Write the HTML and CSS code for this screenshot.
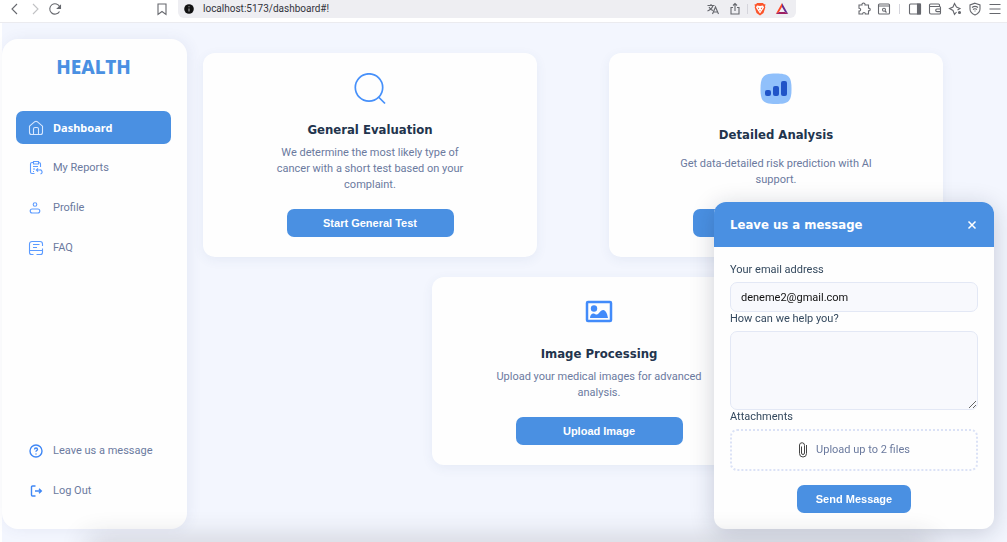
FILE: index.html
```html
<!DOCTYPE html>
<html lang="en">
<head>
<meta charset="utf-8">
<meta name="viewport" content="width=device-width, initial-scale=1">
<title>Health Dashboard</title>
<link rel="stylesheet" href="styles.css">
</head>
<body>
<header class="browser">
  <div class="browser-left">
    <button class="tool" aria-label="Back"><svg viewBox="0 0 16 16"><path d="M10 3 5 8l5 5"/></svg></button>
    <button class="tool faded" aria-label="Forward"><svg viewBox="0 0 16 16"><path d="M6 3l5 5-5 5"/></svg></button>
    <button class="tool" aria-label="Reload"><svg viewBox="0 0 16 16"><path d="M12.500 10.500A5.200 5.200 0 1 1 12.800 6"/><path class="solid" d="M13.500 4.500v3h-3z"/></svg></button>
    <button class="tool bookmark" aria-label="Bookmark"><svg viewBox="0 0 16 16"><path d="M4 3h8v10.500L8 10.500l-4 3z"/></svg></button>
  </div>
  <div class="address">
    <svg class="info" viewBox="0 0 10 10"><circle cx="5" cy="5" r="4.800" fill="#111"/><path d="M5 4.500v3M5 2.300v1" stroke="#999" stroke-width="1.200"/></svg>
    <input class="url" type="text" aria-label="Address" value="localhost:5173/dashboard#!">
    <button class="tool" aria-label="Translate"><svg viewBox="0 0 16 16"><path d="M2.500 4.500h7M6 3v1.500M8 4.500C7 7.500 5 9 2.500 10M4 6c1 2 2 3 4 3.500M7.500 13l3-7 3 7M8.500 11h4"/></svg></button>
    <button class="tool" aria-label="Share"><svg viewBox="0 0 16 16"><path d="M6 6.500H4v6.500h8V6.500h-2M8 10V2.500M6 4.500l2-2 2 2"/></svg></button>
    <span class="divider"></span>
    <button class="tool brave" aria-label="Brave Shields"><svg viewBox="0 0 16 16"><path fill="#fb542b" d="M5 2h6l1 1.200h1.500L13 5.500l.3 1L11.500 12 8 14.500 4.500 12 2.700 6.500l.3-1L2.500 3.200H4z"/><path fill="#fff" d="M5 4.500l3 .5 3-.5 1 2-1.800 2.700L8 12.500 5.800 9.200 4 6.500z"/><path fill="#fb542b" d="M5.500 6.500l1.700.5-.4 1.500zM10.500 6.500l-1.700.5.4 1.500zM7 9.500h2l-1 1z"/></svg></button>
    <button class="tool rewards" aria-label="Rewards"><svg viewBox="0 0 16 16"><path fill="#ff4724" d="M8 2 1.800 13l3.200-2L8 6z"/><path fill="#662d91" d="M8 2l6.200 11L11 11 8 6z"/><path fill="#9e1f63" d="M1.800 13h12.400L11 11H5z"/></svg></button>
  </div>
  <div class="browser-right">
    <button class="tool" aria-label="Extensions"><svg viewBox="0 0 16 16"><path d="M3 4h3c-.6-2.600 3.600-2.600 3 0h3.500v3.200c2.300-.4 2.300 3 0 2.600V13H9.300c.2-2-2.800-2-2.600 0H3v-3c2.200.2 2.200-3 0-2.800z"/></svg></button>
    <button class="tool" aria-label="Search tabs"><svg viewBox="0 0 16 16"><rect x="2.500" y="3" width="11" height="10" rx="1"/><path d="M2.500 5h11M9 10l1.500 1.500"/><circle cx="8" cy="8.800" r="1.500"/></svg></button>
    <span class="divider"></span>
    <button class="tool" aria-label="Side panel"><svg viewBox="0 0 16 16"><rect x="2.500" y="3" width="11" height="10" rx="1"/><path class="solid" d="M10.500 3h3v10h-3z"/></svg></button>
    <button class="tool" aria-label="Wallet"><svg viewBox="0 0 16 16"><path d="M12.500 5.500V4c0-.6-.4-1-1-1h-8a1 1 0 0 0-1 1v7.500c0 1 .7 1.500 1.500 1.500h8.500c.6 0 1-.4 1-1V6.500c0-.6-.4-1-1-1h-10M13.500 8H10a1.300 1.300 0 0 0 0 2.600h3.500"/></svg></button>
    <button class="tool" aria-label="Assistant"><svg viewBox="0 0 16 16"><path d="M9.500 11 7.500 13.500 6 9.500 2.500 7.500 6 6l1.500-3.500L9.500 6l3.500 1.500L10.500 9"/><circle class="solid" cx="12.500" cy="11.500" r="1"/></svg></button>
    <button class="tool" aria-label="VPN"><svg viewBox="0 0 16 16"><path d="M8 2.200 13 4v4c0 3-2 4.700-5 6-3-1.300-5-3-5-6V4zM5 6.500c2-1.500 4-1.500 6 0M6 8.500c1.300-1 2.700-1 4 0M7.500 10h1"/></svg></button>
    <button class="tool" aria-label="Menu"><svg viewBox="0 0 16 16"><path d="M2.500 3.500h11M2.500 8h11M2.500 12.500h11"/></svg></button>
  </div>
</header>

<div class="page">
  <aside class="sidebar">
    <h1 class="brand">HEALTH</h1>
    <nav class="nav">
      <a class="nav-link active" href="#"><svg viewBox="0 0 16 16"><path d="M1.500 6.200 6.800 1.700a2 2 0 0 1 2.400 0l5.300 4.500v6.300a2 2 0 0 1-2 2h-9a2 2 0 0 1-2-2zM5.500 14.500V9a1.500 1.500 0 0 1 1.500-1.500h2A1.500 1.500 0 0 1 10.500 9v5.500"/></svg>Dashboard</a>
      <a class="nav-link" href="#"><svg viewBox="0 0 16 16"><path d="M6.500 13.500H4A1.500 1.500 0 0 1 2.500 12V4A1.500 1.500 0 0 1 4 2.500h1M11 2.500a1.500 1.500 0 0 1 1.500 1.500v3M5.500 1.500h5V4h-5zM5 6.500h5M5 9h2M5 11.500h1M8.500 10h3a2 2 0 0 1 1 4M10 8.300 8.300 10 10 11.700"/></svg>My Reports</a>
      <a class="nav-link" href="#"><svg viewBox="0 0 16 16"><circle cx="7" cy="4.500" r="1.800"/><rect x="2.200" y="9" width="9.600" height="4" rx="2"/></svg>Profile</a>
      <a class="nav-link" href="#"><svg viewBox="0 0 16 16"><path d="M14.500 6V4a2.500 2.500 0 0 0-2.500-2.500H4A2.500 2.500 0 0 0 1.500 4v8.500a2 2 0 0 0 2 2h2M1.500 10.500h13V8.500M14.500 10.500v2a2 2 0 0 1-2 2H8.500M5 4.500h6.500M5 7.500h4"/></svg>FAQ</a>
    </nav>
    <nav class="nav nav-bottom">
      <a class="nav-link" href="#message"><svg viewBox="0 0 16 16"><circle class="bold" cx="8" cy="8" r="6"/><path class="bold" d="M6.500 6.500c0-2 3-2 3 0 0 1-1.500 1-1.500 2.200M8 10.500v1"/></svg>Leave us a message</a>
      <a class="nav-link" href="#"><svg viewBox="0 0 16 16"><path class="bold" d="M7.500 3H4.500a1 1 0 0 0-1 1v8a1 1 0 0 0 1 1h3M7 8h6M11 5.800 13.300 8 11 10.200"/></svg>Log Out</a>
    </nav>
  </aside>

  <main class="cards">
    <section class="card">
      <svg class="card-icon" viewBox="0 0 32 32"><circle cx="15" cy="14.500" r="13.700" fill="none" stroke="#4690fa" stroke-width="1.700"/><path d="M24.500 24l6.500 6.500" stroke="#4690fa" stroke-width="1.700"/></svg>
      <h2 class="card-title">General Evaluation</h2>
      <p class="card-text">We determine the most likely type of cancer with a short test based on your complaint.</p>
      <button class="button">Start General Test</button>
    </section>
    <section class="card">
      <svg class="card-icon" viewBox="0 0 32 32"><path fill="#90c0fb" d="M16 .5C28.500.5 31.500 3.500 31.500 16S28.500 31 16 31 .5 28.500.5 16 3.500.5 16 .5z"/><rect x="5" y="17" width="6" height="6" rx="2" fill="#2054c8"/><rect x="13" y="13" width="6" height="10" rx="2" fill="#2054c8"/><rect x="21" y="8" width="6" height="15" rx="2" fill="#2054c8"/></svg>
      <h2 class="card-title">Detailed Analysis</h2>
      <p class="card-text">Get data-detailed risk prediction with AI support.</p>
      <button class="button" aria-label="Start detailed analysis"></button>
    </section>
    <section class="card card-wide">
      <svg class="card-icon" viewBox="0 0 32 32"><rect x="4" y="5" width="24" height="19" rx="1" fill="none" stroke="#428bfa" stroke-width="2.500"/><circle cx="11" cy="11.500" r="3.200" fill="#428bfa"/><path fill="#428bfa" d="M7 21c0-3 2-5 4-4.500 2 1.500 3 1.500 5-.5 3-4 6-4 8 1l1 4z"/></svg>
      <h2 class="card-title">Image Processing</h2>
      <p class="card-text">Upload your medical images for advanced analysis.</p>
      <button class="button">Upload Image</button>
    </section>
  </main>
</div>

<form class="message" id="message">
  <div class="message-head">
    <h2 class="message-title">Leave us a message</h2>
    <button class="close" type="button" aria-label="Close"><svg viewBox="0 0 10 10"><path d="M1.500 1.500l7 7M8.500 1.500l-7 7"/></svg></button>
  </div>
  <div class="message-body">
    <label class="label" for="email">Your email address</label>
    <input class="field" id="email" type="email" value="deneme2@gmail.com">
    <label class="label" for="help">How can we help you?</label>
    <textarea class="field area" id="help"></textarea>
    <label class="label" for="files">Attachments</label>
    <button class="drop" id="files" type="button"><svg viewBox="0 0 10 16"><path d="M3.500 4.500V11a1.500 1.500 0 0 0 3 0V3.500a2.500 2.500 0 0 0-5-.5v8.500a3.500 3.500 0 0 0 7 0V3"/></svg>Upload up to 2 files</button>
    <button class="button send" type="submit">Send Message</button>
  </div>
</form>
</body>
</html>
```

FILE: styles.css
```css
* {
  box-sizing: border-box;
}

body {
  margin: 0;
  min-height: 100vh;
  display: flex;
  flex-direction: column;
  background: #f3f6fe;
  color: #6b7a9e;
  font: 11px/16px Tahoma, Roboto, sans-serif;
}

/* Soft shade along the bottom edge of the window */
body::after {
  content: "";
  position: fixed;
  right: 80px;
  bottom: -14px;
  left: 90px;
  height: 14px;
  box-shadow: 0 0 28px 2px rgba(40, 40, 50, 0.24);
  pointer-events: none;
}

button,
input,
textarea {
  font: inherit;
  margin: 0;
}

button {
  border: 0;
  cursor: pointer;
}

h1,
h2,
p {
  margin: 0;
}

/* Browser toolbar */
.browser {
  display: flex;
  height: 23px;
  padding: 0 2px 4px 5px;
  background: #fff;
  border-bottom: 1px solid #ebebef;
}

.browser-left,
.browser-right,
.address {
  display: flex;
  align-items: center;
}

.browser-left {
  width: 173px;
  padding-right: 6px;
}

.bookmark {
  margin-left: auto;
}

.browser-right {
  margin-left: auto;
}

.address {
  flex: 1;
  gap: 2px;
  margin-right: 58px;
  padding: 0 4px 0 6px;
  border-radius: 0 0 6px 6px;
  background: #eeeef2;
}

.info {
  width: 10px;
  height: 10px;
}

.url {
  flex: 1;
  min-width: 0;
  padding: 0 0 0 7px;
  border: 0;
  background: none;
  color: #33343c;
  font: 10px/16px Roboto, sans-serif;
}

.tool {
  display: flex;
  justify-content: center;
  width: 20px;
  padding: 0;
  background: none;
}

.tool svg {
  width: 16px;
  height: 16px;
  fill: none;
  stroke: #66686e;
  stroke-width: 1.1;
}

.tool .solid {
  fill: #66686e;
}

.faded {
  opacity: 0.4;
}

.tool.brave svg,
.tool.rewards svg {
  stroke: none;
}

.divider {
  width: 1px;
  height: 10px;
  margin: 0 5px;
  background: #d5d5dc;
}

.address .divider {
  margin: 0;
}

/* Page */
.page {
  flex: 1;
  display: flex;
  gap: 16px;
  padding: 16px 12px 13px 0;
  border-left: 2px solid #fff;
}

.sidebar {
  flex: none;
  display: flex;
  flex-direction: column;
  width: 185px;
  padding: 16px 16px 22px 14px;
  border-radius: 16px;
  background: #fefefe;
  box-shadow: 2px 0 14px rgba(60, 80, 140, 0.08);
}

.brand {
  margin-bottom: 32px;
  color: #4a90e2;
  font: 800 19px/24px "Noto Sans", sans-serif;
  text-align: center;
}

.nav {
  display: flex;
  flex-direction: column;
  gap: 7px;
}

.nav-bottom {
  margin-top: auto;
}

.nav-link {
  display: flex;
  align-items: center;
  gap: 9px;
  height: 33px;
  padding: 0 12px;
  border-radius: 7px;
  color: #6b7a9e;
  text-decoration: none;
}

.nav-link svg {
  width: 16px;
  height: 16px;
  fill: none;
  stroke: #5c9bff;
  stroke-width: 1.1;
}

.nav-link .bold {
  stroke: #3f87f5;
  stroke-width: 1.4;
}

.nav-link.active {
  background: #4a90e2;
  color: #fff;
  font-family: "Noto Sans", sans-serif;
  font-weight: 700;
}

.nav-link.active svg {
  stroke: #d8e8ff;
}

/* Cards */
.cards {
  flex: 1;
  display: grid;
  grid-template-columns: 1fr 1fr;
  align-content: start;
  gap: 20px;
  padding-top: 14px;
}

.card {
  display: flex;
  flex-direction: column;
  align-items: center;
  justify-content: space-between;
  width: 100%;
  max-width: 334px;
  padding: 20px;
  border-radius: 12px;
  background: #fefefe;
  box-shadow: 0 3px 12px rgba(60, 80, 140, 0.07);
  text-align: center;
}

.card-wide {
  grid-column: 1 / -1;
  justify-self: center;
}

.card-icon {
  width: 32px;
  height: 32px;
  margin-bottom: 16px;
}

.card-title {
  margin-bottom: 6px;
  color: #22344d;
  font: 700 13px/18px "DejaVu Sans Condensed", "Noto Sans", sans-serif;
}

.card-text {
  max-width: 210px;
  margin-bottom: 16px;
}

.button {
  width: 167px;
  height: 28px;
  padding: 0;
  border-radius: 7px;
  background: #4a90e2;
  color: #fff;
  font: 700 11px/16px "Liberation Sans", Arial, sans-serif;
}

/* Message form */
.message {
  position: fixed;
  right: 13px;
  bottom: 13px;
  width: 280px;
  overflow: hidden;
  border-radius: 12px;
  background: #fefefe;
  box-shadow: 0 4px 24px rgba(20, 30, 60, 0.2);
}

.message-head {
  display: flex;
  align-items: center;
  justify-content: space-between;
  height: 45px;
  padding: 0 17px 0 16px;
  background: #4a90e2;
  color: #fff;
}

.message-title {
  font: 700 13px/18px "DejaVu Sans Condensed", "Noto Sans", sans-serif;
}

.close {
  display: flex;
  padding: 0;
  background: none;
}

.close svg {
  width: 10px;
  height: 10px;
  stroke: #fff;
  stroke-width: 1.5;
}

.message-body {
  display: flex;
  flex-direction: column;
  padding: 16px;
}

.label {
  margin-bottom: 5px;
  color: #34495e;
  line-height: 14px;
}

.field {
  height: 30px;
  padding: 0 10px;
  border: 1px solid #e3e8f5;
  border-radius: 7px;
  background: #f8f9fd;
  color: #111;
}

.area {
  height: 79px;
  resize: vertical;
}

.drop {
  display: flex;
  align-items: center;
  justify-content: center;
  gap: 8px;
  height: 42px;
  margin-bottom: 14px;
  border: 2px dotted #dbe2f6;
  border-radius: 7px;
  background: none;
  color: #6b7a9e;
}

.drop svg {
  width: 10px;
  height: 16px;
  fill: none;
  stroke: #444;
}

.send {
  align-self: center;
  width: 114px;
}
```
